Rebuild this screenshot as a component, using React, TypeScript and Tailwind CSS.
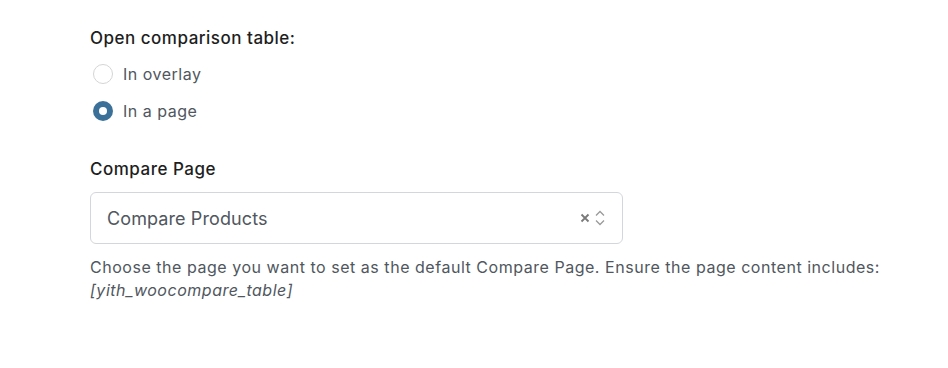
import React from "react";

export default function App() {
  return (
    <div className="w-[948px] h-[368px] bg-white" style={{ fontFamily: "Inter, 'Noto Sans', sans-serif" }}>
      <div className="pl-[90px] pt-[28px]">
        <div className="text-[17px] leading-[20px] text-[#1e1e1e] font-medium tracking-[0.5px]">Open comparison table:</div>
        <div className="mt-[16px] flex flex-col gap-[17px]">
          <label className="flex items-center gap-[10px] h-[20px]">
            <span className="ml-[3px] w-[20px] h-[20px] rounded-full border border-[#d5d5d5] bg-white" />
            <span className="text-[16px] text-[#50575e] tracking-[0.5px]">In overlay</span>
          </label>
          <label className="flex items-center gap-[10px] h-[20px]">
            <span className="ml-[3px] w-[20px] h-[20px] rounded-full bg-[#3b7199] flex items-center justify-center">
              <span className="w-[8px] h-[8px] rounded-full bg-white" />
            </span>
            <span className="text-[16px] text-[#50575e] tracking-[0.5px]">In a page</span>
          </label>
        </div>
        <div className="mt-[38px] text-[17px] leading-[20px] text-[#1e1e1e] font-medium tracking-[0.5px]">Compare Page</div>
        <div className="mt-[13px] w-[533px] h-[52px] rounded-[6px] border border-[#d3d6da] flex items-center pl-[16px] pr-[16px]">
          <span className="flex-1 text-[18px] text-[#50575e] tracking-[0.1px]">Compare Products</span>
          <svg width="10" height="10" viewBox="0 0 10 10" className="mr-[4px]">
            <path d="M1.5 1.5 L8.5 8.5 M8.5 1.5 L1.5 8.5" stroke="#7a7a7a" strokeWidth="1.8" />
          </svg>
          <svg width="12" height="20" viewBox="0 0 12 20">
            <path d="M2 7.5 L6 3.5 L10 7.5 M2 12.5 L6 16.5 L10 12.5" stroke="#9a9a9a" strokeWidth="1.3" fill="none" />
          </svg>
        </div>
        <div className="mt-[12px] text-[16px] leading-[23px] text-[#50575e] tracking-[0.53px] whitespace-nowrap">
          Choose the page you want to set as the default Compare Page. Ensure the page content includes:
          <br />
          <i>[yith_woocompare_table]</i>
        </div>
      </div>
    </div>
  );
}
